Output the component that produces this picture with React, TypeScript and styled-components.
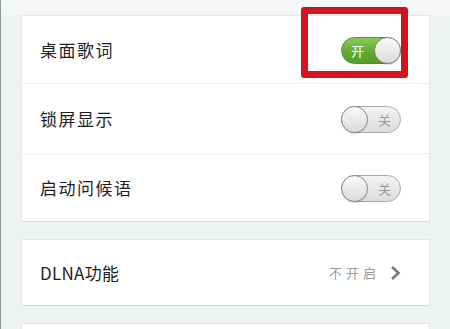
import React from "react";
import styled, { createGlobalStyle } from "styled-components";

const Global = createGlobalStyle`
  html, body { margin: 0; padding: 0; }
  body {
    background: #eef2f2;
    font-family: "Noto Sans CJK SC", "Noto Sans", sans-serif;
  }
`;

const Page = styled.div`
  width: 450px;
  height: 329px;
  box-sizing: border-box;
  border-left: 1px solid #8f9696;
  padding: 15px 20px 0 20px;
  display: flex;
  flex-direction: column;
  gap: 17px;
  overflow: hidden;
  background: linear-gradient(#f5f6f6 0, #f5f6f6 15px, #eef2f2 15px);
`;

const Card = styled.div`
  background: #ffffff;
  border: 1px solid #e3e6e6;
  border-bottom-color: #d6dada;
  display: flex;
  flex-direction: column;
  flex-shrink: 0;
`;

const Row = styled.div<{ $h: number }>`
  height: ${(p) => p.$h}px;
  display: flex;
  align-items: center;
  justify-content: space-between;
  padding: 0 28px 0 18px;
  & + & {
    border-top: 1px solid #eceeee;
  }
`;

const Label = styled.span<{ $tight?: boolean }>`
  font-size: 17px;
  letter-spacing: ${(p) => (p.$tight ? "0.3px" : "1.5px")};
  color: #1e1e1e;
`;

const SwitchWrap = styled.div`
  position: relative;
  margin-top: 1px;
`;

const Track = styled.div<{ $on: boolean }>`
  width: 60px;
  height: 27px;
  box-sizing: border-box;
  border-radius: 14px;
  border: 1px solid ${(p) => (p.$on ? "#4f8c2a" : "#a9a9a9")};
  background: ${(p) =>
    p.$on
      ? "linear-gradient(#88ca57, #61a733 60%, #579d2c)"
      : "linear-gradient(#f4f4f4, #dcdcdc)"};
  display: flex;
  flex-direction: ${(p) => (p.$on ? "row" : "row-reverse")};
  align-items: center;
  justify-content: space-between;
  padding: ${(p) => (p.$on ? "0 0 0 9px" : "0 9px 0 0")};
`;

const SwitchText = styled.span<{ $on: boolean }>`
  font-size: 13px;
  line-height: 1;
  color: ${(p) => (p.$on ? "#ffffff" : "#9a9a9a")};
`;

const Knob = styled.div`
  width: 27px;
  height: 27px;
  margin: -1px;
  box-sizing: border-box;
  border-radius: 50%;
  border: 1px solid #888888;
  background: linear-gradient(#fafafa, #dadada);
  box-shadow: 0 1px 1px rgba(0, 0, 0, 0.15);
`;

const Highlight = styled.div`
  position: absolute;
  left: -40px;
  top: -30px;
  right: -7px;
  bottom: -14px;
  border: 7px solid #d3141e;
  border-radius: 3px;
  pointer-events: none;
`;

const Value = styled.div`
  display: flex;
  align-items: center;
  gap: 10px;
  color: #9a9a9a;
  font-size: 13px;
  letter-spacing: 4px;
`;

const Switch = ({ on, marked }: { on: boolean; marked?: boolean }) => (
  <SwitchWrap>
    <Track $on={on}>
      <SwitchText $on={on}>{on ? "开" : "关"}</SwitchText>
      <Knob />
    </Track>
    {marked && <Highlight />}
  </SwitchWrap>
);

const Chevron = () => (
  <svg width="11" height="16" viewBox="0 0 11 16">
    <path d="M2 2 L8.5 8 L2 14" fill="none" stroke="#7a7a7a" strokeWidth="2.6" />
  </svg>
);

export default function App() {
  return (
    <>
      <Global />
      <Page>
        <Card>
          <Row $h={67}>
            <Label>桌面歌词</Label>
            <Switch on marked />
          </Row>
          <Row $h={69}>
            <Label>锁屏显示</Label>
            <Switch on={false} />
          </Row>
          <Row $h={67}>
            <Label>启动问候语</Label>
            <Switch on={false} />
          </Row>
        </Card>
        <Card>
          <Row $h={65}>
            <Label $tight>DLNA功能</Label>
            <Value>
              <span>不开启</span>
              <Chevron />
            </Value>
          </Row>
        </Card>
        <Card>
          <Row $h={60} />
        </Card>
      </Page>
    </>
  );
}
